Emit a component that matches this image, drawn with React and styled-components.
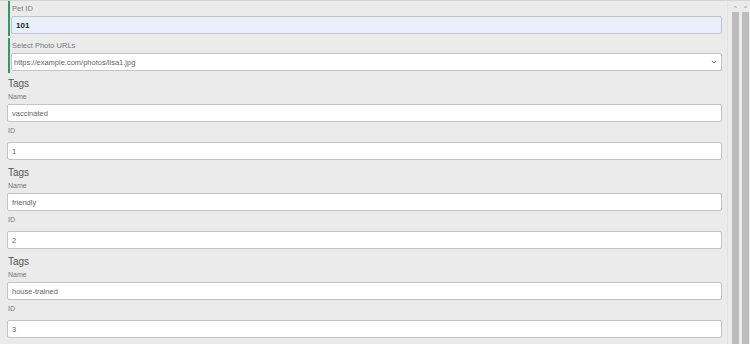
import styled, { createGlobalStyle } from "styled-components";

const GlobalStyle = createGlobalStyle`
  html, body {
    margin: 0;
    padding: 0;
    background: #ebebeb;
    font-family: "Liberation Sans", Arial, sans-serif;
    overflow: hidden;
  }
`;

const tags = [
    { name: "vaccinated", id: "1" },
    { name: "friendly", id: "2" },
    { name: "house-trained", id: "3" },
];

const Page = styled.div`
    display: flex;
    height: 344px;
    border-top: 1px solid #d6d6d6;
    box-sizing: border-box;
`;

const Form = styled.form`
    flex: 1;
    display: flex;
    flex-direction: column;
    padding: 0 5px 0 7px;
`;

const Field = styled.div`
    display: flex;
    flex-direction: column;
    border-left: 2px solid #2e9a6c;
    padding: 3px 0 2px 1px;
    margin: 0 0 2px 1px;
`;

const Label = styled.label`
    font-size: 7.5px;
    color: #7a7a7a;
    height: 9px;
    line-height: 9px;
    margin: 0 0 3px 1px;
`;

const Input = styled.input`
    height: 18px;
    box-sizing: border-box;
    border: 1px solid #c4c4c4;
    border-radius: 2px;
    background: ${({ filled }) => (filled ? "#e8f0fe" : "#fff")};
    font-family: "Liberation Sans", Arial, sans-serif;
    font-size: ${({ filled }) => (filled ? "8px" : "7.5px")};
    font-weight: ${({ filled }) => (filled ? "bold" : "normal")};
    color: ${({ filled }) => (filled ? "#222" : "#666")};
    padding: 0 0 0 4px;
    outline: none;
`;

const SelectBox = styled.div`
    height: 18px;
    box-sizing: border-box;
    border: 1px solid #c4c4c4;
    border-radius: 2px;
    background: #fff;
    display: flex;
    align-items: center;
    justify-content: space-between;
    padding: 0 4px 0 2px;
    font-size: 7.5px;
    color: #666;
`;

const Group = styled.div`
    display: flex;
    flex-direction: column;
    height: 89px;
`;

const GroupTitle = styled.div`
    font-size: 10px;
    color: #555;
    height: 12px;
    line-height: 12px;
    margin: 3px 0 2px 1px;
`;

const SmallLabel = styled.div`
    font-size: 7px;
    color: #777;
    height: 9px;
    line-height: 9px;
    margin: 0 0 ${({ gap }) => gap}px 1px;
`;

const TagInput = styled(Input)`
    margin-bottom: ${({ gap }) => gap}px;
`;

const Rail = styled.div`
    width: 23px;
    display: flex;
    gap: 3px;
    padding: 4px 1px 0 4px;
    box-sizing: border-box;
    border-left: 1px solid #e2e2e2;
`;

const Track = styled.div`
    flex: 1;
    display: flex;
    flex-direction: column;
    align-items: center;
`;

const Arrow = styled.div`
    height: 6px;
    font-size: 6px;
    line-height: 6px;
    color: #888;
`;

const Thumb = styled.div`
    flex: 1;
    width: 100%;
    background: #bcbcbc;
    margin-top: 1px;
`;

function Chevron() {
    return (
        <svg width="6" height="4" viewBox="0 0 6 4">
            <path d="M0.8 0.8l2.2 2.2 2.2-2.2" fill="none" stroke="#555" strokeWidth="0.9" />
        </svg>
    );
}

export default function App() {
    return (
        <>
            <GlobalStyle />
            <Page>
                <Form>
                    <Field>
                        <Label>Pet ID</Label>
                        <Input filled defaultValue="101" />
                    </Field>
                    <Field>
                        <Label>Select Photo URLs</Label>
                        <SelectBox>
                            <span>https://example.com/photos/lisa1.jpg</span>
                            <Chevron />
                        </SelectBox>
                    </Field>
                    {tags.map((t) => (
                        <Group key={t.id}>
                            <GroupTitle>Tags</GroupTitle>
                            <SmallLabel gap={3}>Name</SmallLabel>
                            <TagInput defaultValue={t.name} gap={4} />
                            <SmallLabel gap={7}>ID</SmallLabel>
                            <TagInput defaultValue={t.id} gap={0} />
                        </Group>
                    ))}
                </Form>
                <Rail>
                    <Track>
                        <Arrow>^</Arrow>
                        <Thumb />
                    </Track>
                    <Track>
                        <Arrow>^</Arrow>
                        <Thumb />
                    </Track>
                </Rail>
            </Page>
        </>
    );
}
